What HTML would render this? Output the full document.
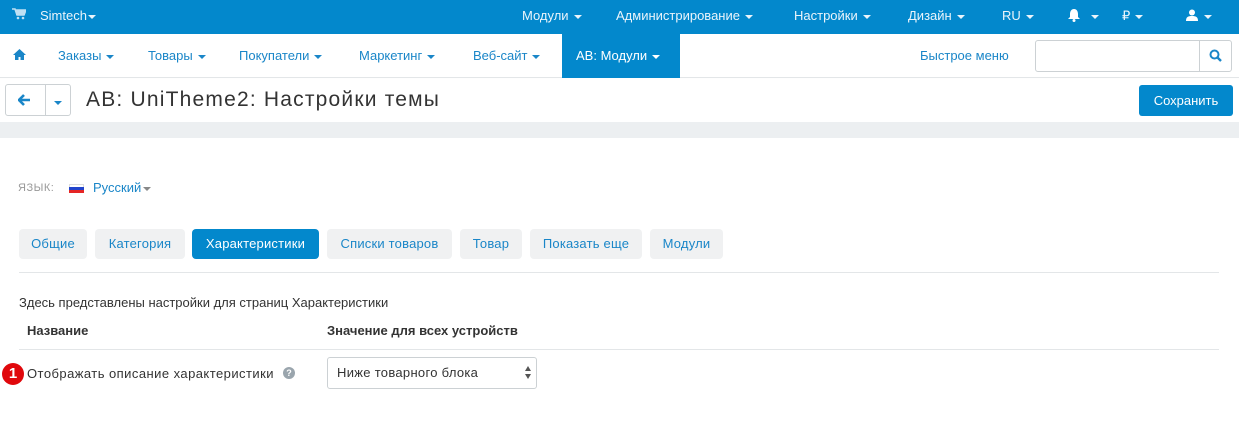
<!DOCTYPE html>
<html><head><meta charset="utf-8">
<style>
*{margin:0;padding:0;box-sizing:border-box}
body{width:1239px;height:445px;background:#fff;font-family:"Liberation Sans",sans-serif;position:relative;overflow:hidden;font-size:13px}
.a{position:absolute;white-space:nowrap}
.top{position:absolute;left:0;top:0;width:1239px;height:34px;background:#0388cc;color:#fff}
.top .a{top:8px;font-size:13px;color:#eaf4fb}
.car{display:inline-block;width:0;height:0;border-left:4px solid transparent;border-right:4px solid transparent;border-top:4px solid currentColor;vertical-align:middle;margin-left:5px}
.nav{position:absolute;left:0;top:34px;width:1239px;height:44px;background:#fff;border-bottom:1px solid #e3e6e8}
.nav .a{top:14px;color:#1a86c8}
.hdr{position:absolute;left:0;top:79px;width:1239px;height:43px;background:#fff;box-shadow:0 2px 3px rgba(0,0,0,.1)}
.band{position:absolute;left:0;top:122px;width:1239px;height:16px;background:#eceff1}
.tab{position:absolute;top:229px;height:30px;background:#f0f1f2;border-radius:4px;color:#1a86c8;line-height:30px;text-align:center;font-size:13px;letter-spacing:.2px}
</style></head><body>
<div class="top">
 <svg class="a" style="left:12px;top:8px" width="14" height="12" viewBox="0 0 14 12"><path d="M0 1h3l2 6h7l2-5H4" fill="none" stroke="#bfe0f3" stroke-width="1.6"/><rect x="4" y="2" width="9" height="5" fill="#bfe0f3"/><circle cx="6" cy="10" r="1.3" fill="#bfe0f3"/><circle cx="11" cy="10" r="1.3" fill="#bfe0f3"/></svg>
 <span class="a" style="left:40px">Simtech<span class="car" style="margin-left:1px"></span></span>
 <span class="a" style="left:522px">Модули<span class="car"></span></span>
 <span class="a" style="left:616px">Администрирование<span class="car"></span></span>
 <span class="a" style="left:794px">Настройки<span class="car"></span></span>
 <span class="a" style="left:908px">Дизайн<span class="car"></span></span>
 <span class="a" style="left:1002px">RU<span class="car"></span></span>
 <svg class="a" style="left:1068px;top:9px" width="12" height="13" viewBox="0 0 12 13"><path d="M6 0C3 0 2 3 2 5v3L0 10h12l-2-2V5C10 3 9 0 6 0z" fill="#fff"/><circle cx="6" cy="11.5" r="1.5" fill="#fff"/></svg>
 <span class="a" style="left:1086px"><span class="car"></span></span>
 <span class="a" style="left:1122px">₽<span class="car"></span></span>
 <svg class="a" style="left:1186px;top:9px" width="12" height="12" viewBox="0 0 12 12"><circle cx="6" cy="3.5" r="3" fill="#fff"/><path d="M0 12c0-4 2-5 6-5s6 1 6 5z" fill="#fff"/></svg>
 <span class="a" style="left:1199px"><span class="car"></span></span>
</div>
<div class="nav">
 <svg class="a" style="left:13px;top:15px" width="13" height="11" viewBox="0 0 13 11"><path d="M6.5 0L0 6h2v5h3.5V8h2v3H11V6h2z" fill="#1a86c8"/></svg>
 <span class="a" style="left:58px">Заказы<span class="car"></span></span>
 <span class="a" style="left:148px">Товары<span class="car"></span></span>
 <span class="a" style="left:239px">Покупатели<span class="car"></span></span>
 <span class="a" style="left:359px">Маркетинг<span class="car"></span></span>
 <span class="a" style="left:473px">Веб-сайт<span class="car"></span></span>
 <div class="a" style="left:562px;top:0;width:118px;height:44px;background:#0388cc"></div>
 <span class="a" style="left:576px;color:#fff">AB: Модули<span class="car"></span></span>
 <span class="a" style="left:920px">Быстрое меню</span>
 <div class="a" style="left:1035px;top:6px;width:197px;height:32px;border:1px solid #ccd1d4;border-radius:3px"></div>
 <div class="a" style="left:1199px;top:6px;width:1px;height:32px;background:#ccd1d4"></div>
 <svg class="a" style="left:1209px;top:15px" width="13" height="13" viewBox="0 0 13 13"><circle cx="5.5" cy="5.5" r="4" fill="none" stroke="#1a86c8" stroke-width="2"/><path d="M8.5 8.5l3.5 3.5" stroke="#1a86c8" stroke-width="2.4"/></svg>
</div>
<div class="hdr">
 <div class="a" style="left:5px;top:5px;width:66px;height:32px;border:1px solid #ccd1d4;border-radius:3px"></div>
 <div class="a" style="left:45px;top:5px;width:1px;height:32px;background:#ccd1d4"></div>
 <svg class="a" style="left:18px;top:15px" width="13" height="12" viewBox="0 0 13 12"><path d="M6 1L1 6l5 5M1 6h11" fill="none" stroke="#1a86c8" stroke-width="2.6"/></svg>
 <span class="a" style="left:54px;top:15px;color:#1a86c8"><span class="car" style="margin-left:0"></span></span>
 <span class="a" style="left:86px;top:9px;font-size:21px;color:#333;letter-spacing:1.2px">AB: UniTheme2: Настройки темы</span>
 <div class="a" style="left:1139px;top:6px;width:94px;height:31px;background:#0388cc;border-radius:3px;color:#fff;line-height:31px;text-align:center">Сохранить</div>
</div>
<div class="band"></div>
<span class="a" style="left:18px;top:182px;color:#999;font-size:11px;letter-spacing:.5px">ЯЗЫК:</span>
<div class="a" style="left:69px;top:184px;width:15px;height:3px;background:#fff;border:1px solid #ddd;border-bottom:none"></div>
<div class="a" style="left:69px;top:187px;width:15px;height:3px;background:#2244cc"></div>
<div class="a" style="left:69px;top:190px;width:15px;height:3px;background:#e52525"></div>
<span class="a" style="left:93px;top:180px;color:#1a86c8">Русский<span class="car" style="margin-left:2px;color:#888"></span></span>
<div class="tab" style="left:19px;width:68px">Общие</div>
<div class="tab" style="left:95px;width:90px">Категория</div>
<div class="tab" style="left:192px;width:127px;background:#0388cc;color:#fff">Характеристики</div>
<div class="tab" style="left:327px;width:125px">Списки товаров</div>
<div class="tab" style="left:460px;width:62px">Товар</div>
<div class="tab" style="left:530px;width:112px">Показать еще</div>
<div class="tab" style="left:650px;width:73px">Модули</div>
<div class="a" style="left:19px;top:272px;width:1200px;height:1px;background:#e3e6e8"></div>
<span class="a" style="left:19px;top:295px;color:#333">Здесь представлены настройки для страниц Характеристики</span>
<span class="a" style="left:27px;top:323px;color:#333;font-weight:bold">Название</span>
<span class="a" style="left:327px;top:323px;color:#333;font-weight:bold">Значение для всех устройств</span>
<div class="a" style="left:19px;top:349px;width:1200px;height:1px;background:#e3e6e8"></div>
<div class="a" style="left:2px;top:363px;width:22px;height:22px;border-radius:50%;background:#e0080c;color:#fff;font-weight:bold;font-size:15px;line-height:22px;text-align:center">1</div>
<span class="a" style="left:27px;top:366px;color:#333;letter-spacing:.45px">Отображать описание характеристики</span>
<div class="a" style="left:283px;top:367px;width:12px;height:12px;border-radius:50%;background:#9aa5ad;color:#fff;font-size:9px;font-weight:bold;line-height:12px;text-align:center">?</div>
<div class="a" style="left:327px;top:357px;width:210px;height:32px;border:1px solid #ccd1d4;border-radius:3px;color:#333;line-height:30px;padding-left:9px;letter-spacing:.3px">Ниже товарного блока</div>
<div class="a" style="left:525px;top:366px;width:0;height:0;border-left:3px solid transparent;border-right:3px solid transparent;border-bottom:5px solid #555"></div>
<div class="a" style="left:525px;top:374px;width:0;height:0;border-left:3px solid transparent;border-right:3px solid transparent;border-top:5px solid #555"></div>
</body></html>
